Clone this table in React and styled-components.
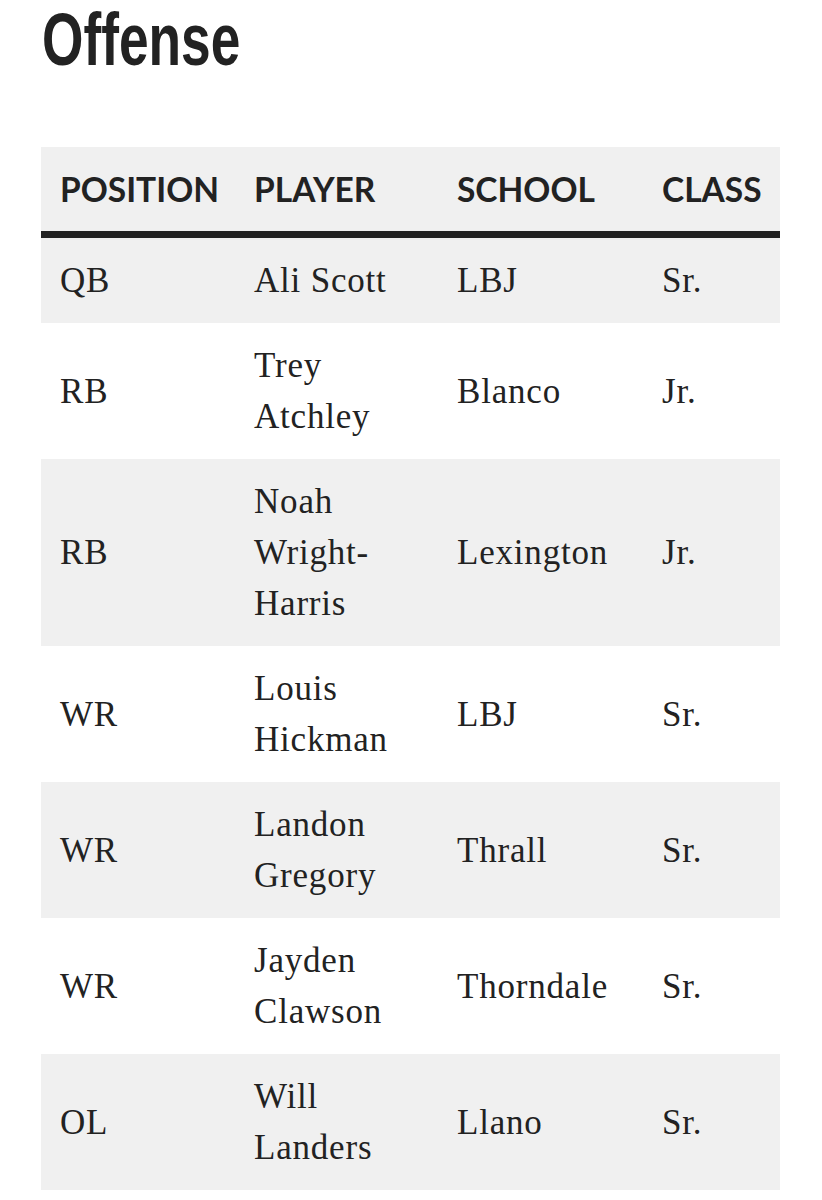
import React from 'react';
import styled, { createGlobalStyle } from 'styled-components';

const GlobalStyle = createGlobalStyle`
  body {
    margin: 0;
    background: #ffffff;
  }
`;

const Page = styled.div`
  padding: 0 42px 0 41px;
  color: #222222;
`;

const HeadingWrap = styled.div`
  height: 147px;
`;

const Heading = styled.h2`
  display: inline-block;
  font-family: 'Liberation Sans', Arial, sans-serif;
  font-weight: 700;
  font-size: 74px;
  line-height: 80px;
  margin: 0 0 0 1px;
  padding: 0;
  transform: scaleX(0.72);
  transform-origin: left top;
  color: #222222;
`;

const Table = styled.table`
  width: 100%;
  border-collapse: collapse;
  table-layout: fixed;
`;

const HeadRow = styled.tr`
  background: #f0f0f0;
  border-bottom: 7px solid #222222;
`;

const HeadCell = styled.th`
  font-family: Lato, 'Open Sans', sans-serif;
  font-weight: 700;
  font-size: 33.5px;
  text-transform: uppercase;
  text-align: left;
  padding: 0 0 0 19px;
  height: 84px;
  vertical-align: middle;
  color: #222222;
  white-space: nowrap;
`;

const Row = styled.tr`
  background: ${props => (props.shaded ? '#f0f0f0' : '#ffffff')};
`;

const Cell = styled.td`
  font-family: 'Liberation Serif', 'DejaVu Serif', serif;
  font-size: 35px;
  line-height: 51px;
  letter-spacing: 0.8px;
  padding: 17px 6px 17px 19px;
  vertical-align: middle;
  color: #222222;
`;

const columns = [
  { label: 'Position', width: 194 },
  { label: 'Player', width: 203 },
  { label: 'School', width: 205 },
  { label: 'Class', width: 137 },
];

const players = [
  { pos: 'QB', name: ['Ali Scott'], school: 'LBJ', year: 'Sr.' },
  { pos: 'RB', name: ['Trey', 'Atchley'], school: 'Blanco', year: 'Jr.' },
  { pos: 'RB', name: ['Noah', 'Wright-', 'Harris'], school: 'Lexington', year: 'Jr.' },
  { pos: 'WR', name: ['Louis', 'Hickman'], school: 'LBJ', year: 'Sr.' },
  { pos: 'WR', name: ['Landon', 'Gregory'], school: 'Thrall', year: 'Sr.' },
  { pos: 'WR', name: ['Jayden', 'Clawson'], school: 'Thorndale', year: 'Sr.' },
  { pos: 'OL', name: ['Will', 'Landers'], school: 'Llano', year: 'Sr.' },
];

const App = () => {
  return (
    <Page>
      <GlobalStyle />
      <HeadingWrap>
        <Heading>Offense</Heading>
      </HeadingWrap>
      <Table>
        <colgroup>
          {columns.map(col => (
            <col key={col.label} style={{ width: `${col.width}px` }} />
          ))}
        </colgroup>
        <thead>
          <HeadRow>
            {columns.map(col => (
              <HeadCell key={col.label}>{col.label}</HeadCell>
            ))}
          </HeadRow>
        </thead>
        <tbody>
          {players.map((p, index) => (
            <Row key={`${p.pos}-${index}`} shaded={index % 2 === 0}>
              <Cell>{p.pos}</Cell>
              <Cell>
                {p.name.map((part, i) => (
                  <React.Fragment key={i}>
                    {i > 0 && <br />}
                    {part}
                  </React.Fragment>
                ))}
              </Cell>
              <Cell>{p.school}</Cell>
              <Cell>{p.year}</Cell>
            </Row>
          ))}
        </tbody>
      </Table>
    </Page>
  );
};

export default App;
